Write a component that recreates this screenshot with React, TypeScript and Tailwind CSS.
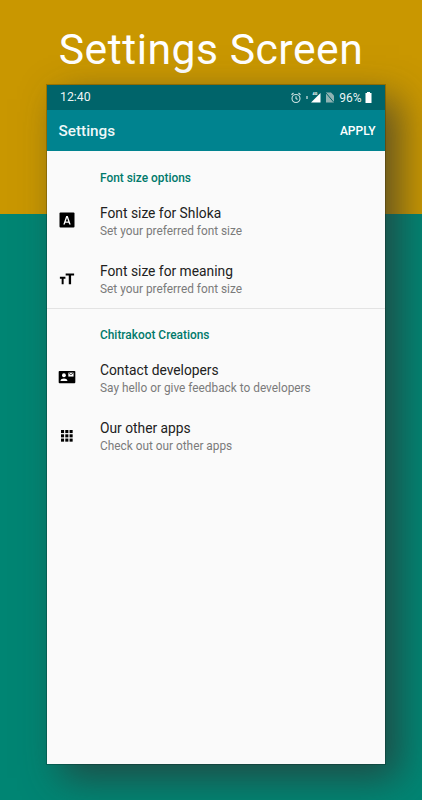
import React from 'react';

const rowTitle = "text-[13.8px] leading-[17px] text-[#212121]";
const rowSub = "text-[11.85px] leading-[16px] mt-[1px] text-[#7b7b7b]";

function Row({ icon, title, sub }: { icon: React.ReactNode; title: string; sub: string }) {
  return (
    <div className="flex items-center h-[58.5px]">
      <div className="w-[41px] mr-[12.5px] mb-[2px] flex justify-center shrink-0">{icon}</div>
      <div className="mt-[1px]">
        <div className={rowTitle}>{title}</div>
        <div className={rowSub}>{sub}</div>
      </div>
    </div>
  );
}

const FontBoxIcon = (
  <svg width="18" height="18" viewBox="0 0 18 18">
    <rect x="1.5" y="1.5" width="15" height="15" rx="1" fill="#000" />
    <path d="M5.3 13.6 8.2 5h1.6l2.9 8.6h-1.5l-.6-1.9H7.4l-.6 1.9zM7.8 10.5h2.4L9 6.7z" fill="#fff" />
  </svg>
);

const TextSizeIcon = (
  <svg width="16" height="16" viewBox="0 0 18 18">
    <path d="M7.5 2.8H17v2.4h-3.4V15h-2.6V5.2H7.5z" fill="#000" />
    <path d="M1 6.5h6.2v2.1H5.2V15H3V8.6H1z" fill="#000" />
  </svg>
);

const ContactIcon = (
  <svg width="18" height="14" viewBox="0 0 20 16">
    <rect x="0.5" y="1" width="19" height="14" rx="1" fill="#000" />
    <circle cx="6.5" cy="6" r="2.2" fill="#fff" />
    <path d="M2.5 12.5c.3-2 2-2.8 4-2.8s3.7.8 4 2.8z" fill="#fff" />
    <rect x="11.5" y="3" width="6" height="4.5" fill="#fff" />
    <path d="M11.8 3.4 14.5 5.4 17.2 3.4" stroke="#000" strokeWidth="0.8" fill="none" />
  </svg>
);

const GridIcon = (
  <svg width="12" height="12" viewBox="0 0 14 14">
    {[0, 5, 10].map((y) =>
      [0, 5, 10].map((x) => <rect key={`${x}-${y}`} x={x} y={y} width="3.6" height="3.6" fill="#000" />)
    )}
  </svg>
);

function StatusIcons() {
  return (
    <div className="flex items-center">
      <svg width="12" height="12" viewBox="0 0 24 24" fill="none" stroke="#cfe3e3" strokeWidth="2.2" className="mr-[4px]">
        <circle cx="12" cy="13" r="8" />
        <path d="M12 8.5V13l3 2M3 5.5 7 2M21 5.5 17 2" />
      </svg>
      <span className="w-[2px] h-[3px] bg-white/50 mr-[2px]" />
      <svg width="11" height="11" viewBox="0 0 11 11" className="mr-[5px]">
        <path d="M10.5 1v9.5H1z" fill="#fff" />
        <text x="2.5" y="3.4" fontSize="3.8" fontWeight="700" fill="#fff" fontFamily="Roboto, sans-serif">4G</text>
      </svg>
      <svg width="8" height="11" viewBox="0 0 8 11" className="mr-[5px]">
        <path d="M0 .5h5l3 3v7H0z" fill="#8fb3b3" />
        <path d="M0 1 8 10.5" stroke="#00656a" strokeWidth="1" />
      </svg>
      <span className="text-[12px] text-white/95 mr-[3px]">96%</span>
      <svg width="7" height="11" viewBox="0 0 7 11">
        <path d="M2 0h3v1h1.5v10H.5V1H2z" fill="#fff" />
      </svg>
    </div>
  );
}

export default function App() {
  return (
    <div
      className="w-[422px] h-[800px] overflow-hidden flex flex-col items-center bg-[linear-gradient(to_bottom,#c99700_214px,#008573_214px)]"
      style={{ fontFamily: 'Roboto, sans-serif' }}
    >
      <h1 className="h-[85px] pt-[22px] text-[42.7px] leading-[54px] text-white tracking-[0.5px] whitespace-nowrap">
        Settings Screen
      </h1>
      <div className="w-[338px] h-[679px] ml-[9px] flex flex-col bg-[#fafafa] shadow-[14px_14px_36px_rgba(45,50,50,0.7)] outline outline-1 outline-black/20">
        <div className="h-[25px] bg-[#00646a] flex items-center justify-between pl-[13.5px] pr-[13px] shrink-0">
          <span className="text-[12.3px] text-white/95">12:40</span>
          <StatusIcons />
        </div>
        <div className="h-[41px] bg-[#00838f] flex items-center justify-between pl-[12px] pr-[9px] shrink-0">
          <span className="text-[15.3px] font-medium text-white/95 pt-[2px]">Settings</span>
          <span className="text-[12px] font-medium text-white">APPLY</span>
        </div>

        <div className="text-[11.9px] font-medium text-[#00796b] pl-[53.5px] pt-[20px] leading-[14px]">Font size options</div>
        <div className="mt-[7px]">
          <Row icon={FontBoxIcon} title="Font size for Shloka" sub="Set your preferred font size" />
          <Row icon={TextSizeIcon} title="Font size for meaning" sub="Set your preferred font size" />
        </div>
        <div className="h-px bg-[#e3e3e3] mt-[-1px]" />

        <div className="text-[11.9px] font-medium text-[#00796b] pl-[53.5px] pt-[19px] leading-[14px]">Chitrakoot Creations</div>
        <div className="mt-[7px]">
          <Row icon={ContactIcon} title="Contact developers" sub="Say hello or give feedback to developers" />
          <Row icon={GridIcon} title="Our other apps" sub="Check out our other apps" />
        </div>
      </div>
    </div>
  );
}
